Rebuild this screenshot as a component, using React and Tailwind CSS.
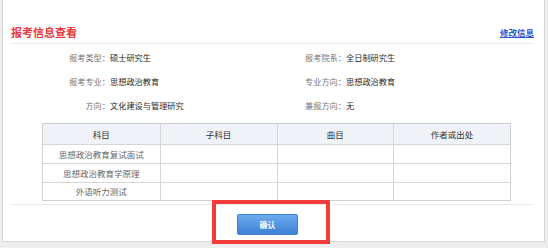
const font = { fontFamily: '"Noto Sans CJK SC", "Noto Sans", sans-serif' };

const infoRows = [
  [['报考类型：', '硕士研究生'], ['报考院系：', '全日制研究生']],
  [['报考专业：', '思想政治教育'], ['专业方向：', '思想政治教育']],
  [['方向：', '文化建设与管理研究'], ['兼报方向：', '无']],
];

const subjects = ['思想政治教育复试面试', '思想政治教育学原理', '外语听力测试'];

function InfoItem({ label, value, wide }) {
  return (
    <div className={`flex items-center ${wide ? 'w-[236px]' : ''}`}>
      <span className="w-[70px] text-right text-[#777]">{label}</span>
      <span className="text-[#2a2a2a]">{value}</span>
    </div>
  );
}

export default function App() {
  return (
    <div className="relative w-[548px] h-[248px] bg-[#eeeeee] overflow-hidden" style={font}>
      <div className="ml-[2px] w-[543px] h-[242px] border-l border-r border-b border-[#d6d6d6] bg-white">
        {/* heading */}
        <div className="ml-[8px] mr-[10px] pt-[24px] pb-[3px] flex items-center justify-between border-b border-[#ececec]">
          <span className="text-[11px] leading-[16px] font-bold text-[#e8383d]">报考信息查看</span>
          <a href="#" className="text-[8.5px] leading-[16px] font-bold text-[#2a56d0] underline">修改信息</a>
        </div>

        {/* info rows */}
        <div className="mt-[1px] pl-[37px] text-[8.2px]">
          {infoRows.map((row, i) => (
            <div key={i} className="flex h-[24px] items-center">
              <InfoItem label={row[0][0]} value={row[0][1]} wide />
              <InfoItem label={row[1][0]} value={row[1][1]} />
            </div>
          ))}
        </div>

        {/* subjects table */}
        <div className="ml-[39px] mt-[6px] w-[469px] border border-[#cfcfcf] text-[8.5px]">
          <div className="grid grid-cols-4 h-[20px] bg-[#eff2f6] text-[#333]">
            {['科目', '子科目', '曲目', '作者或出处'].map((h, i) => (
              <div key={h} className={`flex items-center justify-center ${i > 0 ? 'border-l border-[#d6d6d6]' : ''}`}>{h}</div>
            ))}
          </div>
          {subjects.map((s, i) => (
            <div key={s} className={`grid grid-cols-4 ${i === 2 ? 'h-[18px]' : 'h-[19px]'} border-t border-[#d6d6d6] text-[#666]`}>
              <div className="flex items-center justify-center">{s}</div>
              <div className="border-l border-[#d6d6d6]" />
              <div className="border-l border-[#d6d6d6]" />
              <div className="border-l border-[#d6d6d6]" />
            </div>
          ))}
        </div>

        <div className="ml-[8px] mr-[10px] mt-[3px] border-t border-[#ececec]" />

        <div className="mt-[9px] pl-[234px] flex">
          <button className="w-[61px] h-[21px] rounded-[2px] border border-[#3f7fcc] bg-gradient-to-b from-[#6eacef] to-[#3d80d4] text-white text-[8px] leading-none font-bold">
            确认
          </button>
        </div>
      </div>

      {/* highlight annotation */}
      <div className="absolute left-[212px] top-[200px] w-[118px] h-[44px] border-4 border-[#f23b3b]" />
    </div>
  );
}
